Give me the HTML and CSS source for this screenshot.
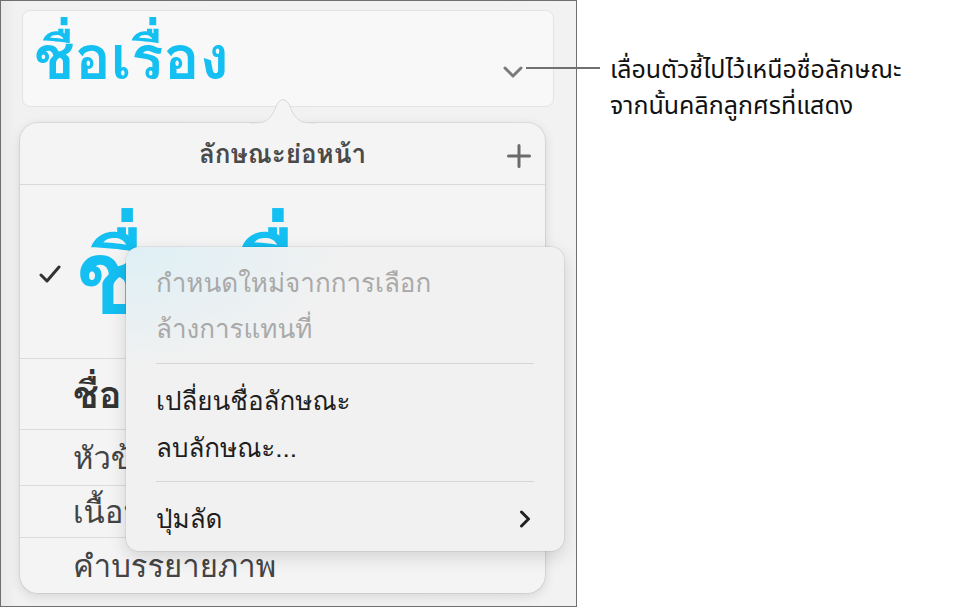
FILE: index.html
```html
<!DOCTYPE html>
<html lang="th">
<head>
<meta charset="utf-8">
<title>ลักษณะย่อหน้า</title>
<link rel="stylesheet" href="styles.css">
</head>
<body>
<div class="page">
  <div class="frame">
    <div class="title-field">
      <span class="title-text">ชื่อเรื่อง</span>
      <svg class="chev-down" width="20" height="12" viewBox="0 0 20 12"><path d="M2 2 L10 10 L18 2" fill="none" stroke="#7a7a7a" stroke-width="3" stroke-linecap="round" stroke-linejoin="round"/></svg>
    </div>
    <div class="popover">
      <svg class="pop-arrow" width="66" height="28" viewBox="0 0 66 28"><path d="M0 27.5 C15 27.5 21 25 27 8 Q33 -1 39 8 C45 25 51 27.5 66 27.5" fill="#f4f4f4" stroke="#d9d9d9" stroke-width="1"/><rect x="0" y="27.5" width="66" height="1" fill="#f4f4f4"/></svg>
      <div class="pop-header">
        <span class="pop-title">ลักษณะย่อหน้า</span>
        <svg class="plus" width="24" height="24" viewBox="0 0 24 24"><path d="M12 1.5 V22.5 M1.5 12 H22.5" stroke="#6b6b6b" stroke-width="3" stroke-linecap="round"/></svg>
      </div>
      <div class="row row-title">
        <svg class="check" width="22" height="20" viewBox="0 0 22 20"><path d="M2 11 L8 17 L20 3" fill="none" stroke="#333" stroke-width="3" stroke-linecap="round" stroke-linejoin="round"/></svg>
        <span class="big">ชื่อเรื่อง</span>
      </div>
      <div class="row row-name">ชื่อ</div>
      <div class="row row-plain r-head">หัวข้อ</div>
      <div class="row row-plain r-body">เนื้อหา</div>
      <div class="row row-plain r-cap">คำบรรยายภาพ</div>

      <div class="menu">
        <div class="item disabled">กำหนดใหม่จากการเลือก</div>
        <div class="item disabled">ล้างการแทนที่</div>
        <div class="sep"></div>
        <div class="item">เปลี่ยนชื่อลักษณะ</div>
        <div class="item">ลบลักษณะ...</div>
        <div class="sep"></div>
        <div class="item sub">
          <span>ปุ่มลัด</span>
          <svg class="chev-right" width="12" height="18" viewBox="0 0 12 18"><path d="M2.5 2 L9.5 9 L2.5 16" fill="none" stroke="#222" stroke-width="3" stroke-linecap="round" stroke-linejoin="round"/></svg>
        </div>
      </div>
    </div>
  </div>
  <div class="leader"></div>
  <div class="callout">
    <p>เลื่อนตัวชี้ไปไว้เหนือชื่อลักษณะ</p>
    <p>จากนั้นคลิกลูกศรที่แสดง</p>
  </div>
</div>
</body>
</html>
```

FILE: styles.css
```css
* { box-sizing: border-box; }
html, body { margin: 0; padding: 0; background: #ffffff; }
body {
  font-family: "Noto Sans Thai", "Noto Sans", "DejaVu Sans", sans-serif;
  color: #222;
}
.page {
  position: relative;
  display: flex;
  align-items: flex-start;
  width: 956px;
  height: 609px;
}
.frame {
  width: 577px;
  height: 607px;
  border: 1px solid #6f6f6f;
  background: linear-gradient(90deg, #e9e9e9 0px, #f1f1f1 14px, #f2f2f2 100%);
  padding: 9px 0 0 19px;
  display: flex;
  flex-direction: column;
  align-items: flex-start;
  overflow: hidden;
  font-family: "Garuda", "Loma", "Waree", "Noto Sans Thai Looped", "Noto Sans Thai", "Noto Sans", sans-serif;
}
.title-field {
  margin-left: 2px;
  width: 532px;
  height: 97px;
  background: #f8f8f8;
  border: 1px solid #e3e3e3;
  border-radius: 8px;
  display: flex;
  align-items: center;
  padding: 0 30px 0 11px;
  justify-content: space-between;
}
.title-text {
  font-weight: 700;
  font-size: 60px;
  line-height: 1;
  color: #14bff2;
  margin-top: -2px;
}
.chev-down { margin-top: 26px; }

.popover {
  position: relative;
  margin-top: 16px;
  width: 525px;
  height: 470px;
  background: #f4f4f4;
  border-radius: 18px;
  box-shadow: 0 0 0 1px rgba(0,0,0,0.07), 0 3px 12px rgba(0,0,0,0.12);
  display: flex;
  flex-direction: column;
}
.pop-arrow {
  position: absolute;
  left: 230px;
  top: -27px;
}
.pop-header {
  height: 62px;
  display: flex;
  align-items: center;
  justify-content: center;
  position: relative;
  border-bottom: 1px solid #d9d9d9;
}
.pop-title {
  font-weight: 700;
  font-size: 26px;
  color: #4a4a4a;
}
.plus {
  position: absolute;
  right: 14px;
  top: 21px;
}
.row {
  display: flex;
  align-items: center;
  padding-left: 53px;
  border-bottom: 1px solid #dcdcdc;
  overflow: hidden;
  position: relative;
}
.row-title { height: 174px; padding-left: 19px; }
.check { margin-right: 15px; margin-top: 4px; }
.big {
  font-weight: 700;
  font-size: 102px;
  line-height: 1;
  color: #14bff2;
  margin-top: 10px;
}
.row-name {
  height: 71px;
  font-weight: 700;
  font-size: 38px;
  color: #333;
}
.row-plain {
  font-size: 31px;
  color: #444;
}
.r-head { height: 56px; }
.r-body { height: 52px; }
.r-cap { height: 55px; border-bottom: none; }

.menu {
  position: absolute;
  left: 106px;
  top: 124px;
  width: 438px;
  height: 304px;
  background:
    radial-gradient(ellipse 220px 120px at 0% 0%, rgba(218,239,246,0.85), rgba(218,239,246,0) 100%),
    #f1f1f1;
  border-radius: 13px;
  box-shadow: 0 0 0 1px rgba(0,0,0,0.06), 0 6px 18px rgba(0,0,0,0.14);
  padding: 12px 30px 9px 30px;
  display: flex;
  flex-direction: column;
}
.item {
  height: 47px;
  display: flex;
  align-items: center;
  font-size: 26px;
  color: #1e1e1e;
  white-space: nowrap;
}
.item.disabled { color: #a9a9a9; }
.item.sub { justify-content: space-between; }
.chev-right { margin-right: 3px; }
.sep {
  height: 1px;
  background: #d6d6d6;
  margin: 11px 0 13px;
}

.leader {
  position: absolute;
  left: 526px;
  top: 67px;
  width: 74px;
  height: 2px;
  background: #707070;
}
.callout {
  margin-left: 33px;
  margin-top: 52px;
}
.callout p {
  margin: 0;
  font-size: 25px;
  line-height: 36px;
  color: #111;
}
```
